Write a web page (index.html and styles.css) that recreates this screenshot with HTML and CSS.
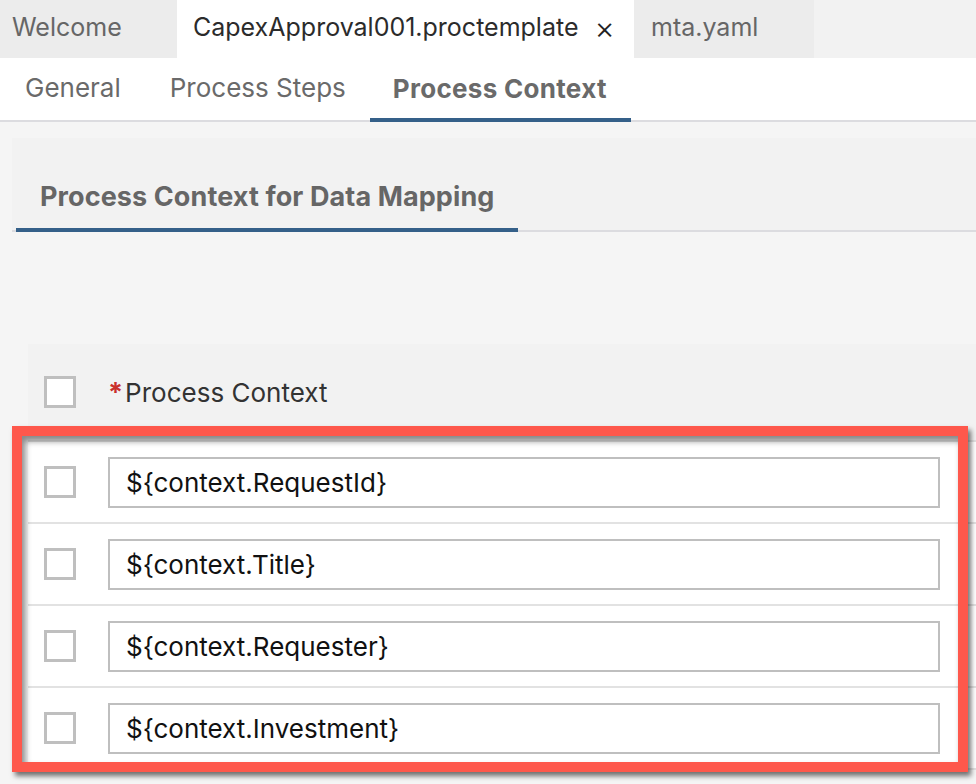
FILE: index.html
```html
<!DOCTYPE html>
<html>
<head>
<meta charset="utf-8">
<link rel="stylesheet" href="styles.css">
</head>
<body>
<div class="filetabs">
  <div class="ftab ftab-welcome">Welcome</div>
  <div class="ftab ftab-active"><span>CapexApproval001.proctemplate</span><span class="close">×</span></div>
  <div class="ftab ftab-mta">mta.yaml</div>
</div>
<div class="subtabs">
  <div class="stab">General</div>
  <div class="stab">Process Steps</div>
  <div class="stab stab-active">Process Context</div>
</div>
<div class="panel">
  <div class="panel-head">
    <div class="panel-tab">Process Context for Data Mapping</div>
  </div>
  <div class="panel-body">
    <div class="table">
      <div class="thead">
        <div class="cbcell"><span class="cb"></span></div>
        <div class="th"><span class="req">*</span>Process Context</div>
      </div>
      <div class="row">
        <div class="cbcell"><span class="cb"></span></div>
        <div class="field">${context.RequestId}</div>
      </div>
      <div class="row">
        <div class="cbcell"><span class="cb"></span></div>
        <div class="field">${context.Title}</div>
      </div>
      <div class="row">
        <div class="cbcell"><span class="cb"></span></div>
        <div class="field">${context.Requester}</div>
      </div>
      <div class="row">
        <div class="cbcell"><span class="cb"></span></div>
        <div class="field">${context.Investment}</div>
      </div>
    </div>
  </div>
</div>
<div class="highlight"></div>
</body>
</html>
```
FILE: styles.css
```css
* { box-sizing: border-box; }
html, body { margin: 0; padding: 0; }
body {
  background: #f5f5f5;
  font-family: Inter, "Liberation Sans", Arial, sans-serif;
  width: 976px;
  height: 784px;
  overflow: hidden;
  position: relative;
}
.filetabs {
  display: flex;
  height: 58px;
  background: #f2f2f2;
}
.ftab {
  display: flex;
  align-items: center;
  padding-bottom: 4px;
  font-size: 25px;
  color: #666;
  white-space: nowrap;
}
.ftab-welcome { width: 177px; padding-left: 12px; background: #ececec; }
.ftab-active { width: 457px; padding-left: 16px; background: #fff; color: #2b2b2b; }
.ftab-active .close { margin-left: 16px; font-size: 31px; font-weight: 300; line-height: 1; color: #222; }
.ftab-mta { width: 180px; padding-left: 17px; background: #ececec; }

.subtabs {
  display: flex;
  height: 64px;
  background: #fff;
  border-bottom: 2px solid #dcdce0;
}
.stab {
  display: flex;
  align-items: center;
  padding: 0 24px 4px 25px;
  font-size: 26px;
  color: #6a6a6a;
  white-space: nowrap;
}
.stab-active {
  font-weight: 700;
  letter-spacing: 0.3px;
  padding-left: 23px;
  margin-bottom: -2px;
  box-shadow: inset 0 -4px 0 #356089;
}

.panel {
  margin: 16px 0 0 12px;
}
.panel-head {
  display: flex;
  height: 94px;
  background: #f2f2f2;
  border-bottom: 2px solid #dcdce0;
}
.panel-tab {
  display: flex;
  align-items: flex-end;
  margin-left: 4px;
  margin-bottom: -2px;
  padding: 0 24px 19px 24px;
  font-size: 27px;
  font-weight: 700;
  letter-spacing: 0.1px;
  color: #666;
  box-shadow: inset 0 -4px 0 #356089;
  white-space: nowrap;
}
.panel-body {
  padding: 112px 0 0 16px;
}
.table { background: #fff; }
.thead {
  display: flex;
  align-items: center;
  height: 98px;
  background: #f2f2f2;
  border-bottom: 2px solid #e2e2e2;
}
.row {
  display: flex;
  align-items: center;
  height: 82px;
  background: #fff;
  border-bottom: 2px solid #e2e2e2;
}
.cbcell {
  width: 80px;
  padding-left: 16px;
  display: flex;
  align-items: center;
}
.cb {
  display: block;
  width: 32px;
  height: 32px;
  border: 3px solid #bfbfbf;
  background: #fff;
}
.th {
  font-size: 26px;
  color: #333;
  display: flex;
  align-items: center;
}
.req {
  color: #c9302c;
  font-weight: 700;
  margin-right: 2px;
  font-size: 27px;
}
.field {
  width: 832px;
  height: 51px;
  border: 2px solid #bfbfbf;
  background: #fff;
  display: flex;
  align-items: center;
  padding-left: 16px;
  font-size: 26px;
  color: #111;
}
.highlight {
  position: absolute;
  left: 12px;
  top: 426px;
  width: 956px;
  height: 346px;
  border: 10px solid #fe584c;
  box-shadow: 3px 4px 5px rgba(0,0,0,0.55), inset 3px 5px 6px rgba(0,0,0,0.45);
}
```
